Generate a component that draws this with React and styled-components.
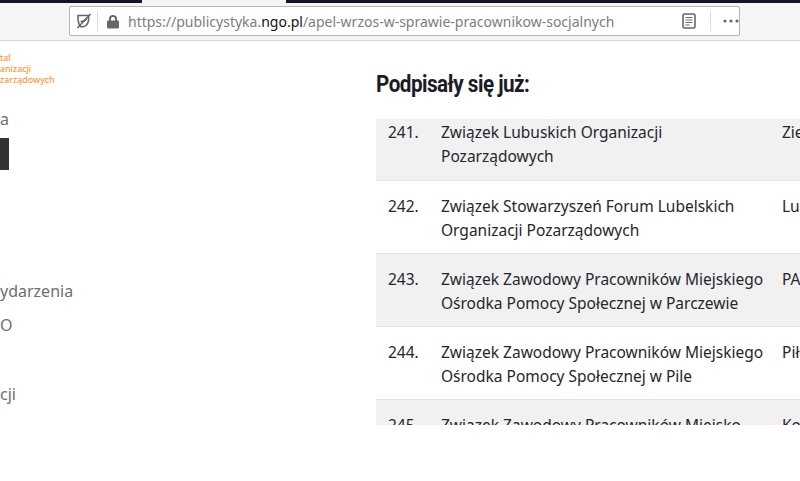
import React from "react";
import styled, { createGlobalStyle } from "styled-components";

const GlobalStyle = createGlobalStyle`
  html, body {
    margin: 0;
    padding: 0;
    background: #fff;
    overflow: hidden;
  }
`;

const Page = styled.div`
  width: 800px;
  height: 481px;
  display: flex;
  flex-direction: column;
  overflow: hidden;
  font-family: "Noto Sans", sans-serif;
`;

const TabStrip = styled.div`
  height: 3px;
  display: grid;
  grid-template-columns: 142px 144px 1fr;
  flex-shrink: 0;
`;

const TabDark = styled.div`
  background: #14142b;
`;

const TabActive = styled.div`
  background: #f5f5f5;
`;

const Toolbar = styled.div`
  height: 38px;
  flex-shrink: 0;
  display: flex;
  align-items: flex-start;
  padding: 3px 0 0 69px;
  box-sizing: border-box;
  background: #f5f5f5;
  border-bottom: 1px solid #d8d8d8;
`;

const UrlBar = styled.div`
  width: 671px;
  height: 30px;
  box-sizing: border-box;
  display: flex;
  align-items: center;
  background: #fff;
  border: 1px solid #b4b4b4;
  border-radius: 2px;
  flex-shrink: 0;
`;

const IconSlot = styled.div`
  width: 27px;
  height: 20px;
  display: flex;
  align-items: center;
  justify-content: center;
  border-right: 1px solid #dcdcdc;
  flex-shrink: 0;
`;

const Lock = styled.div`
  width: 30px;
  display: flex;
  justify-content: center;
  flex-shrink: 0;
`;

const Url = styled.div`
  flex: 1;
  font-size: 14px;
  color: #7d7d7d;
  white-space: nowrap;
  b {
    font-weight: 400;
    color: #111;
  }
`;

const ReaderIcon = styled.div`
  width: 16px;
  margin-right: 12px;
  display: flex;
`;

const BarDivider = styled.div`
  width: 1px;
  height: 20px;
  background: #dcdcdc;
`;

const ToolbarRight = styled.div`
  display: flex;
  align-items: center;
  flex-shrink: 0;
`;

const Dots = styled.div`
  width: 16px;
  margin-left: 12px;
  display: flex;
`;

const Main = styled.div`
  display: flex;
  height: 384px;
  flex-shrink: 0;
`;

const Sidebar = styled.aside`
  width: 376px;
  flex-shrink: 0;
  display: flex;
  flex-direction: column;
  padding-top: 11px;
  box-sizing: border-box;
`;

const Logo = styled.div`
  color: #ff8a1e;
  font-size: 9px;
  line-height: 11px;
  height: 33px;
`;

const MenuTop = styled.div`
  margin-top: 23px;
  font-size: 16px;
  line-height: 22px;
  color: #6f6f6f;
`;

const DarkTab = styled.div`
  width: 9px;
  height: 32px;
  margin-top: 8px;
  background: #333;
`;

const MenuList = styled.div`
  margin-top: 110px;
  display: flex;
  flex-direction: column;
`;

const MenuItem = styled.div`
  height: ${(p) => p.$h}px;
  font-size: 16px;
  line-height: 22px;
  color: #6f6f6f;
`;

const Content = styled.section`
  flex: 1;
  min-width: 0;
  display: flex;
  flex-direction: column;
`;

const Heading = styled.h2`
  margin: 28px 0 0;
  height: 50px;
  font-family: "Roboto", sans-serif;
  font-size: 24px;
  line-height: 30px;
  font-weight: 700;
  color: #1c1c26;
  letter-spacing: -0.6px;
  transform: scaleX(0.86);
  transform-origin: left;
  white-space: nowrap;
`;

const TableClip = styled.div`
  height: 306px;
  overflow: hidden;
`;

const Row = styled.div`
  display: grid;
  grid-template-columns: 65px 341px 1fr;
  height: ${(p) => p.$h}px;
  box-sizing: border-box;
  padding-top: 1px;
  background: ${(p) => (p.$shaded ? "#f1f1f1" : "#fff")};
  border-bottom: 1px solid #e2e2e6;
  font-size: 15.5px;
  line-height: 24px;
  color: #26262e;
`;

const Num = styled.div`
  padding-left: 12px;
`;

const Name = styled.div`
  white-space: pre-line;
`;

const City = styled.div`
  white-space: nowrap;
  overflow: hidden;
`;

const rows = [
  { n: "241.", name: "Związek Lubuskich Organizacji\nPozarządowych", city: "Zielona", h: 62, shaded: true, top: 0 },
  { n: "242.", name: "Związek Stowarzyszeń Forum Lubelskich\nOrganizacji Pozarządowych", city: "Lublin", h: 73 },
  { n: "243.", name: "Związek Zawodowy Pracowników Miejskiego\nOśrodka Pomocy Społecznej w Parczewie", city: "PARCZEW", h: 73, shaded: true },
  { n: "244.", name: "Związek Zawodowy Pracowników Miejskiego\nOśrodka Pomocy Społecznej w Pile", city: "Piła", h: 73 },
  { n: "245.", name: "Związek Zawodowy Pracowników Miejsko\nGminnego Ośrodka Pomocy", city: "Koszalin", h: 73, shaded: true },
];

const RowInner = styled.div`
  display: contents;
`;

const Pad = styled.div`
  padding-top: ${(p) => p.$top}px;
`;

export default function App() {
  return (
    <>
      <GlobalStyle />
      <Page>
        <TabStrip>
          <TabDark />
          <TabActive />
          <TabDark />
        </TabStrip>
        <Toolbar>
          <UrlBar>
            <IconSlot>
              <svg width="16" height="16" viewBox="0 0 16 16" fill="none" stroke="#666" strokeWidth="1.6">
                <path d="M2 2.5h10.5c.5 3.5 0 7-2 9.5-1.5 1.5-4 2-6 1.5C2.5 11 1.8 6 2 2.5z" />
                <path d="M4.5 8.5c2.5.3 4.5-.5 6-3" />
                <path d="M1.5 15L14.5 1" />
              </svg>
            </IconSlot>
            <Lock>
              <svg width="14" height="15" viewBox="0 0 14 15" fill="#666">
                <path d="M3 6.5V4.6C3 2.3 4.8 1 7 1s4 1.3 4 3.6v1.9h.8c.7 0 1.2.5 1.2 1.2v5.6c0 .7-.5 1.2-1.2 1.2H2.2c-.7 0-1.2-.5-1.2-1.2V7.7c0-.7.5-1.2 1.2-1.2H3zm2 0h4V4.6C9 3.4 8.1 2.9 7 2.9s-2 .5-2 1.7v1.9z" />
              </svg>
            </Lock>
            <Url>
              https://publicystyka.<b>ngo.pl</b>/apel-wrzos-w-sprawie-pracownikow-socjalnych
            </Url>
            <ReaderIcon>
              <svg width="14" height="16" viewBox="0 0 14 16" fill="none" stroke="#666">
                <rect x="1" y="1" width="12" height="14" rx="1.5" strokeWidth="1.6" />
                <path d="M3.5 4.5h7M3.5 7h7M3.5 9.500h7M3.500 12h4" strokeWidth="1.2" />
              </svg>
            </ReaderIcon>
            <ToolbarRight>
              <BarDivider />
              <Dots>
                <svg width="16" height="4" viewBox="0 0 16 4" fill="#666">
                  <circle cx="2" cy="2" r="1.6" />
                  <circle cx="8" cy="2" r="1.6" />
                  <circle cx="14" cy="2" r="1.6" />
                </svg>
              </Dots>
            </ToolbarRight>
          </UrlBar>
        </Toolbar>
        <Main>
          <Sidebar>
            <Logo>
              tal
              <br />
              anizacji
              <br />
              zarządowych
            </Logo>
            <MenuTop>a</MenuTop>
            <DarkTab />
            <MenuList>
              <MenuItem $h={34}>ydarzenia</MenuItem>
              <MenuItem $h={69}>O</MenuItem>
              <MenuItem $h={22}>cji</MenuItem>
            </MenuList>
          </Sidebar>
          <Content>
            <Heading>Podpisały się już:</Heading>
            <TableClip>
              {rows.map((r) => (
                <Row key={r.n} $h={r.h} $shaded={r.shaded}>
                  <RowInner>
                    <Pad $top={r.top ?? 12}><Num>{r.n}</Num></Pad>
                    <Pad $top={r.top ?? 12}><Name>{r.name}</Name></Pad>
                    <Pad $top={r.top ?? 12}><City>{r.city}</City></Pad>
                  </RowInner>
                </Row>
              ))}
            </TableClip>
          </Content>
        </Main>
      </Page>
    </>
  );
}
